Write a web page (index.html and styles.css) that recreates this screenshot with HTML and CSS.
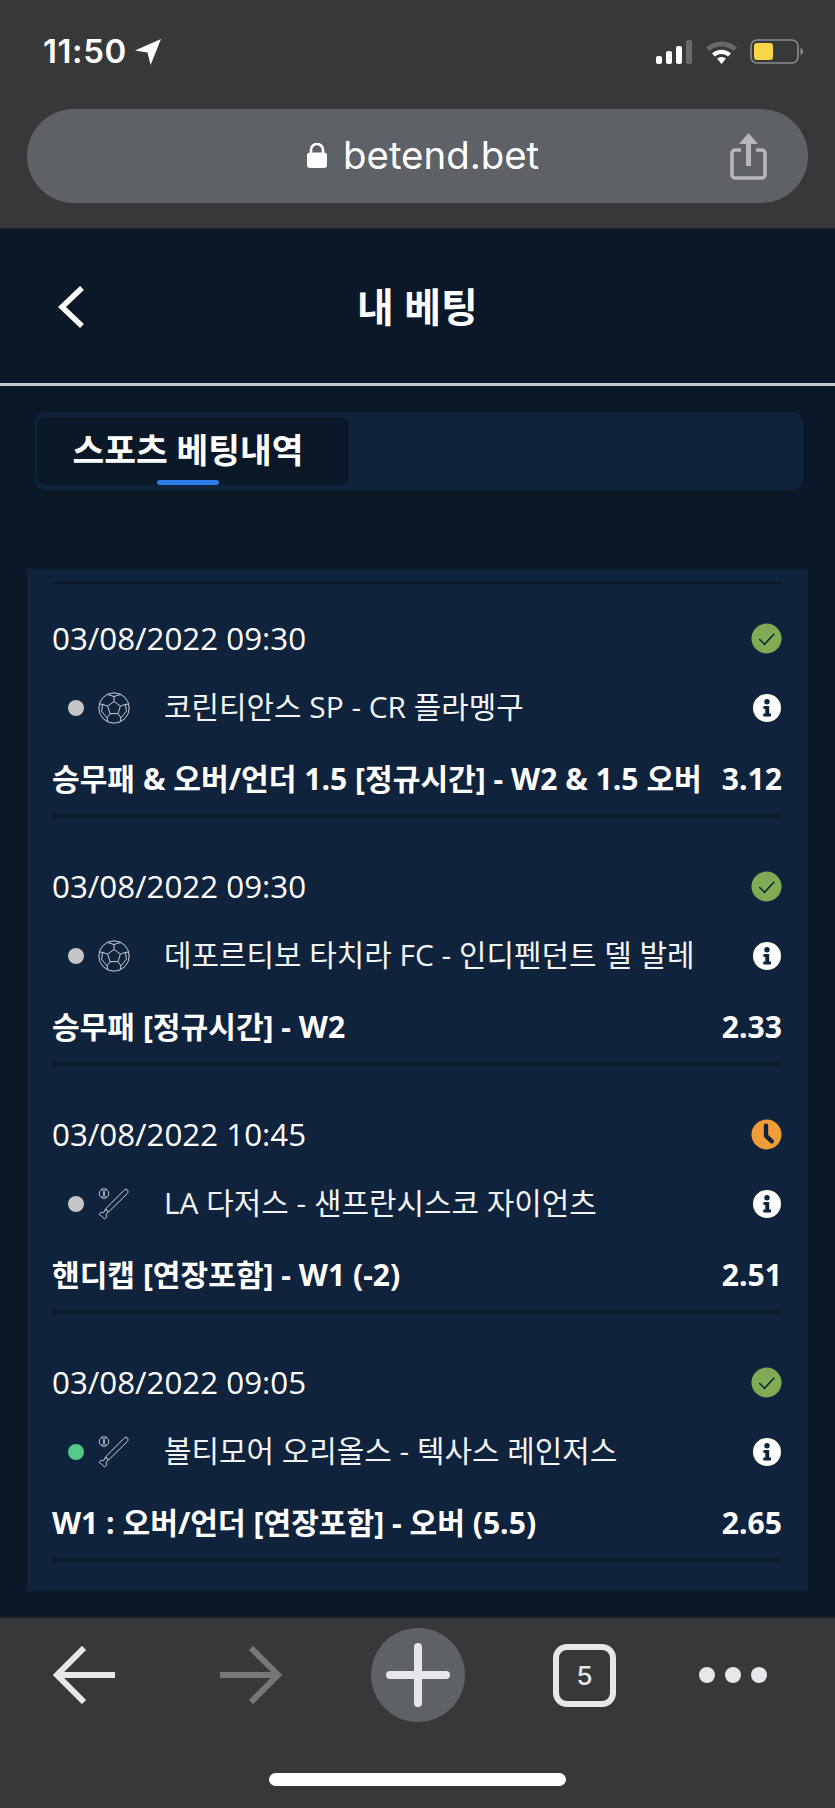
FILE: index.html
```html
<!DOCTYPE html>
<html lang="ko">
<head>
<meta charset="utf-8">
<title>내 베팅</title>
<link rel="stylesheet" href="styles.css">
</head>
<body>
<svg class="defs" width="0" height="0" aria-hidden="true">
  <defs>
    <symbol id="ball" viewBox="0 0 32 32">
      <g fill="none" stroke="#c9ced4" stroke-width="1">
        <circle cx="16" cy="16" r="15.2"/>
        <path d="M16 9.5l6.4 4.6-2.4 7.5h-8l-2.4-7.5z"/>
        <path d="M16 9.5V4.5M22.4 14.1l5-1.7M20 21.6l3 4.2M12 21.6l-3 4.2M9.6 14.1l-5-1.7"/>
        <path d="M9.5 2.5L16 4.5l6.5-2M27.4 12.4l3.4-.4M27.4 12.4l1 6.8-3 3.6-2.400 3M23 25.800l-1 4.300M9 25.800l1 4.300M4.600 12.400l-3.400-.4M4.600 12.400l-1 6.800 3 3.600 2.400 3"/>
      </g>
    </symbol>
    <symbol id="bat" viewBox="0 0 32 32">
      <g fill="none" stroke="#c9ced4" stroke-width="1">
        <circle cx="6" cy="5.500" r="4.800"/>
        <path d="M4.500 1.500c1.300 2.500 1.300 5.500 0 8M7.500 1.500c-1.300 2.500-1.300 5.500 0 8"/>
        <path d="M27 1.500c1.500-.8 3.500.8 3 2.800-.2.800-1 1.600-2 2.600L10.500 24l-3-3L24.500 3.800c1-1 1.600-1.700 2.500-2.300z"/>
        <path d="M7.500 21l3 3-2.500 2.200.8 2.800-2.300 1.800-5.300-4.400 2-2.200 2.500.5z"/>
      </g>
    </symbol>
    <symbol id="check" viewBox="0 0 32 32">
      <circle cx="16" cy="16" r="15.500" fill="#7fab55"/>
      <path d="M8.500 16.500l5.500 5.500L24 11" fill="none" stroke="#10233c" stroke-width="1.600"/>
    </symbol>
    <symbol id="clock" viewBox="0 0 32 32">
      <circle cx="16" cy="16" r="15.500" fill="#f09c38"/>
      <path d="M15.500 7v10.500l6 5.500" fill="none" stroke="#10233c" stroke-width="4.500" stroke-linecap="round" stroke-linejoin="round"/>
    </symbol>
    <symbol id="info" viewBox="0 0 28 28">
      <circle cx="14" cy="14" r="14" fill="#fff"/>
      <circle cx="14" cy="7.800" r="2.700" fill="#10233c"/>
      <path d="M10.500 12h5.700v7.500H18v3H10.300v-3h2V15h-1.800z" fill="#10233c"/>
    </symbol>
  </defs>
</svg>

<header class="chrome-top">
  <div class="status">
    <div class="status-left">
      <span class="clock-text">11:50</span>
      <svg class="loc" viewBox="0 0 25 25"><path d="M25 0L15 25l-3-12L0 11z" fill="#fff"/></svg>
    </div>
    <div class="status-right">
      <svg class="signal" viewBox="0 0 37 24">
        <rect x="0" y="16" width="6" height="8" rx="2" fill="#fff"/>
        <rect x="10" y="11" width="6" height="13" rx="2" fill="#fff"/>
        <rect x="20" y="6" width="6" height="18" rx="2" fill="#fff"/>
        <rect x="30" y="0" width="6" height="24" rx="2" fill="#68696b"/>
      </svg>
      <svg class="wifi" viewBox="0 0 33 25">
        <path d="M1 8.500C9.500 .5 23.500 .5 32 8.500L28.500 12C22 6 11 6 4.500 12z" fill="#68696b"/>
        <path d="M7 14.500c5.500-5 13.500-5 19 0l-3 3c-3.800-3.300-9.200-3.300-13 0z" fill="#fff"/>
        <path d="M12 19.500c2.700-2.100 6.300-2.100 9 0L16.500 25z" fill="#fff"/>
      </svg>
      <svg class="battery" viewBox="0 0 53 25">
        <rect x="1" y="1" width="47" height="23" rx="6" fill="none" stroke="#8a8b8d" stroke-width="1.600"/>
        <rect x="4" y="4" width="19" height="17" rx="3" fill="#f8d648"/>
        <path d="M50.500 9c1.600.5 2.500 2 2.500 3.500s-.9 3-2.500 3.500z" fill="#8a8b8d"/>
      </svg>
    </div>
  </div>
  <div class="address">
    <svg class="lock" viewBox="0 0 22 25"><path d="M5 10V7a6 6 0 0 1 12 0v3" fill="none" stroke="#fff" stroke-width="2.600"/><rect x="1" y="9.500" width="20" height="15.500" rx="3" fill="#fff"/></svg>
    <span class="url">betend.bet</span>
    <svg class="share" viewBox="0 0 37 48">
      <path d="M18.500 1L9 12h7v22h5V12h7z" fill="#b5b7ba"/>
      <path d="M11 18H5a3 3 0 0 0-3 3v22a3 3 0 0 0 3 3h27a3 3 0 0 0 3-3V21a3 3 0 0 0-3-3h-6" fill="none" stroke="#b5b7ba" stroke-width="3.500"/>
    </svg>
  </div>
</header>

<nav class="nav">
  <svg class="back" viewBox="0 0 26 42"><path d="M24 2L4 21l20 19" fill="none" stroke="#fff" stroke-width="5.500"/></svg>
  <h1 class="title">내 베팅</h1>
</nav>

<main class="main">
  <div class="tabs">
    <div class="tab">스포츠 베팅내역<span class="tab-mark"></span></div>
  </div>
  <section class="panel">
    <article class="bet">
      <div class="line"><span class="date">03/08/2022 09:30</span><svg class="state"><use href="#check"/></svg></div>
      <div class="line teams"><span class="dot"></span><svg class="sport"><use href="#ball"/></svg><span class="team">코린티안스 SP - CR 플라멩구</span><svg class="more"><use href="#info"/></svg></div>
      <div class="line pick"><span class="market">승무패 &amp; 오버/언더 1.5 [정규시간] - W2 &amp; 1.5 오버</span><span>3.12</span></div>
    </article>
    <article class="bet">
      <div class="line"><span class="date">03/08/2022 09:30</span><svg class="state"><use href="#check"/></svg></div>
      <div class="line teams"><span class="dot"></span><svg class="sport"><use href="#ball"/></svg><span class="team">데포르티보 타치라 FC - 인디펜던트 델 발레</span><svg class="more"><use href="#info"/></svg></div>
      <div class="line pick"><span class="market">승무패 [정규시간] - W2</span><span>2.33</span></div>
    </article>
    <article class="bet">
      <div class="line"><span class="date">03/08/2022 10:45</span><svg class="state"><use href="#clock"/></svg></div>
      <div class="line teams"><span class="dot"></span><svg class="sport"><use href="#bat"/></svg><span class="team">LA 다저스 - 샌프란시스코 자이언츠</span><svg class="more"><use href="#info"/></svg></div>
      <div class="line pick"><span class="market">핸디캡 [연장포함] - W1 (-2)</span><span>2.51</span></div>
    </article>
    <article class="bet">
      <div class="line"><span class="date">03/08/2022 09:05</span><svg class="state"><use href="#check"/></svg></div>
      <div class="line teams"><span class="dot live"></span><svg class="sport"><use href="#bat"/></svg><span class="team">볼티모어 오리올스 - 텍사스 레인저스</span><svg class="more"><use href="#info"/></svg></div>
      <div class="line pick"><span class="market">W1 : 오버/언더 [연장포함] - 오버 (5.5)</span><span>2.65</span></div>
    </article>
  </section>
</main>

<footer class="chrome-bottom">
  <div class="toolbar">
    <svg class="arrow" viewBox="0 0 62 58"><path d="M31 2L4 29l27 27M4 29h58" fill="none" stroke="#e6e7ea" stroke-width="6"/></svg>
    <svg class="arrow" viewBox="0 0 62 58"><path d="M31 2l27 27-27 27M58 29H0" fill="none" stroke="#767779" stroke-width="6"/></svg>
    <div class="plus-wrap"><svg class="plus" viewBox="0 0 64 64"><path d="M32 4v56M4 32h56" fill="none" stroke="#e6e7ea" stroke-width="8" stroke-linecap="round"/></svg></div>
    <div class="count">5</div>
    <div class="dots"><span></span><span></span><span></span></div>
  </div>
  <div class="home"></div>
</footer>
</body>
</html>
```

FILE: styles.css
```css
* { box-sizing: border-box; }
html, body { margin: 0; padding: 0; }
body {
  width: 835px;
  height: 1808px;
  display: flex;
  flex-direction: column;
  overflow: hidden;
  background: #0a1828;
  color: #fff;
  font-family: "Open Sans", "Noto Sans CJK KR", sans-serif;
}
.defs { position: absolute; }

.chrome-top {
  height: 230px;
  flex: none;
  background: #37383a;
  border-bottom: 2px solid #1c1d20;
  padding: 38px 27px 0;
}
.status {
  height: 27px;
  display: flex;
  justify-content: space-between;
  align-items: center;
  padding: 0 5px 0 16px;
}
.status-left { display: flex; align-items: center; gap: 8px; }
.clock-text {
  font-family: Inter, sans-serif;
  font-size: 33px;
  font-weight: 600;
  letter-spacing: 0.6px;
  line-height: 27px;
}
.loc { width: 26px; height: 26px; }
.status-right { display: flex; align-items: center; gap: 12px; }
.signal { width: 37px; height: 24px; }
.wifi { width: 33px; height: 25px; }
.battery { width: 53px; height: 25px; }

.address {
  margin-top: 44px;
  height: 94px;
  border-radius: 47px;
  background: #5e6165;
  display: flex;
  align-items: center;
  padding: 0 41px 0 279px;
}
.lock { width: 22px; height: 25px; margin-bottom: 2px; }
.url {
  margin-left: 15px;
  margin-bottom: 3px;
  font-size: 38.4px;
  line-height: 50px;
  font-family: Inter, sans-serif;
  font-weight: 400;
}
.share { width: 37px; height: 48px; margin-left: auto; }

.nav {
  height: 156px;
  flex: none;
  display: grid;
  grid-template-columns: 1fr auto 1fr;
  align-items: center;
  padding: 0 58px;
  border-bottom: 3px solid #c9c9c9;
  background: #0a1828;
}
.back { width: 26px; height: 42px; }
.title {
  margin: 0;
  font-size: 40px;
  font-weight: 600;
  line-height: 50px;
}

.main { flex: 1; background: #0a1828; padding: 26px 27px 0; }
.tabs {
  margin: 0 0 79px 8px;
  width: 768px;
  height: 78px;
  padding: 5px 0 5px 2px;
  border-radius: 10px;
  background: #10233c;
}
.tab {
  position: relative;
  width: 312px;
  height: 68px;
  padding-right: 10px;
  border-radius: 8px;
  background: #0a1828;
  text-align: center;
  font-size: 34.5px;
  font-weight: 600;
  line-height: 66px;
}
.tab-mark {
  position: absolute;
  left: 120px;
  bottom: 0;
  width: 62px;
  height: 5px;
  border-radius: 3px;
  background: #2d7be8;
}

.panel {
  width: 781px;
  height: 1022px;
  background: #10233c;
  padding: 13px 26px 0;
}
.panel::before { content: ""; display: block; height: 2px; background: #0a1828; }
.bet {
  padding: 49px 0 16px;
  border-bottom: 2px solid #0a1828;
}
.bet:first-of-type { padding-top: 34px; }
.line {
  height: 40px;
  display: flex;
  align-items: center;
  justify-content: space-between;
}
.date { font-size: 31.3px; line-height: 40px; margin-left: -1px; }
.state { width: 31px; height: 31px; }
.teams { margin-top: 30px; justify-content: flex-start; }
.dot { width: 16px; height: 16px; margin-left: 15px; border-radius: 50%; background: #c4c4c6; }
.dot.live { background: #55c98a; }
.sport { width: 32px; height: 32px; margin-left: 14px; }
.team {
  margin-left: 34px;
  margin-bottom: 3px;
  font-size: 29.9px;
  font-weight: 400;
  line-height: 40px;
  color: #f4f5f6;
}
.more { width: 28px; height: 28px; margin-left: auto; margin-right: 1px; }
.pick {
  margin-top: 31px;
  font-size: 30.1px;
  font-weight: 700;
  line-height: 40px;
  white-space: nowrap;
}
.market { margin-left: -1px; }

.chrome-bottom {
  height: 191px;
  flex: none;
  background: #37383a;
  border-top: 2px solid #2a2c30;
  padding-top: 9px;
}
.toolbar {
  height: 94px;
  display: grid;
  grid-template-columns: repeat(5, 167px);
  align-items: center;
  justify-items: center;
}
.arrow { width: 62px; height: 58px; }
.plus-wrap {
  width: 94px;
  height: 94px;
  border-radius: 50%;
  background: #5e6165;
  display: flex;
  align-items: center;
  justify-content: center;
}
.plus { width: 64px; height: 64px; }
.count {
  width: 63px;
  height: 63px;
  border: 6px solid #e6e7ea;
  border-radius: 14px;
  font-family: Inter, sans-serif;
  font-size: 26px;
  font-weight: 500;
  line-height: 51px;
  text-align: center;
  color: #e6e7ea;
}
.dots { display: flex; gap: 10px; justify-self: start; margin-left: 31px; }
.dots span { width: 16px; height: 16px; border-radius: 50%; background: #e6e7ea; }
.home {
  width: 297px;
  height: 13px;
  margin: 51px auto 0 269px;
  border-radius: 7px;
  background: #fff;
}
```
